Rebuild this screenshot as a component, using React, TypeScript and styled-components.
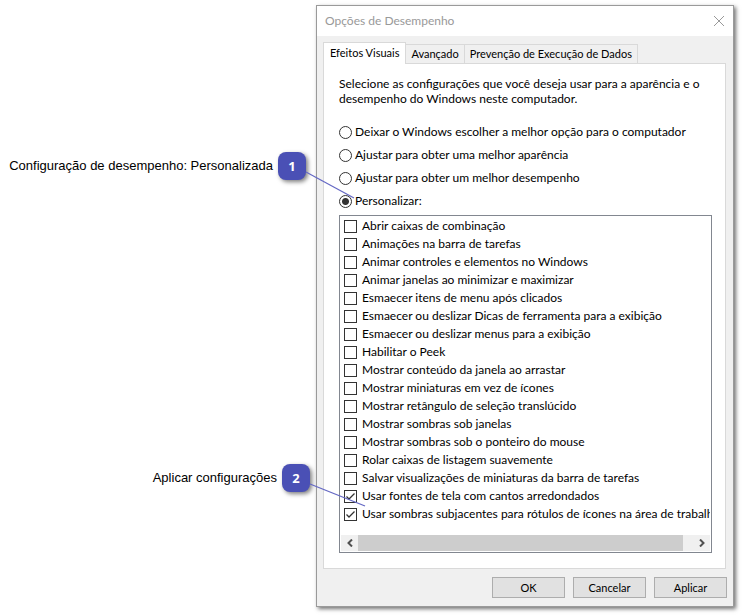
import React, { useState } from "react";
import styled, { createGlobalStyle } from "styled-components";

const GlobalStyle = createGlobalStyle`
  *, *::before, *::after { box-sizing: border-box; }
  body {
    margin: 0;
    background: #ffffff;
    color: #000000;
    font: 12px/16px Lato, "Noto Sans", sans-serif;
  }
  button, input { font: inherit; color: inherit; margin: 0; }
`;

const Page = styled.main`
  display: grid;
  grid-template-columns: 316px minmax(0, 1fr);
  padding: 5px 8px 8px 0;
`;

const Callouts = styled.aside`
  display: flex;
  flex-direction: column;
  gap: 284px;
  padding-top: 147px;
`;

const CalloutRow = styled.div<{ $inset: number }>`
  display: flex;
  align-items: center;
  justify-content: flex-end;
  gap: 5px;
  padding-right: ${(p) => p.$inset}px;
  font: 13px/16px "Liberation Sans", Arial, sans-serif;
  white-space: nowrap;
`;

const Badge = styled.span`
  position: relative;
  z-index: 1;
  display: flex;
  align-items: center;
  justify-content: center;
  width: 28px;
  height: 28px;
  border-radius: 8px;
  background: #4a50b5;
  box-shadow: 2px 2px 4px rgba(0, 0, 0, 0.5);
  color: #ffffff;
  font: bold 13px/16px "Noto Sans", sans-serif;
`;

const Connector = styled.svg`
  position: absolute;
  left: 100%;
  top: 20px;
  overflow: visible;
  pointer-events: none;
`;

const Dialog = styled.section`
  display: flex;
  flex-direction: column;
  border: 1px solid #9a9a9a;
  background: #f0f0f0;
  box-shadow: 2px 2px 4px rgba(0, 0, 0, 0.55);
`;

const TitleBar = styled.header`
  display: flex;
  align-items: center;
  justify-content: space-between;
  height: 30px;
  padding: 0 8px;
  background: #ffffff;
`;

const Title = styled.h1`
  margin: 0;
  color: #999999;
  font-size: 12px;
  line-height: 16px;
  font-weight: 400;
`;

const CloseButton = styled.button`
  display: flex;
  padding: 0;
  border: 0;
  background: none;
`;

const TabStrip = styled.div`
  display: flex;
  align-items: flex-end;
  height: 21px;
  margin: 6px 6px 0;
`;

const Tab = styled.button<{ $active: boolean }>`
  position: relative;
  height: ${(p) => (p.$active ? 22 : 19)}px;
  margin-bottom: ${(p) => (p.$active ? -1 : 0)}px;
  padding: 0 ${(p) => (p.$active ? 6 : 5)}px ${(p) => (p.$active ? 2 : 0)}px;
  border: 1px solid #d9d9d9;
  border-bottom: 0;
  & + & { border-left-width: 0; }
  background: ${(p) => (p.$active ? "#ffffff" : "#f0f0f0")};
  font-size: 11px;
  line-height: 16px;
  white-space: nowrap;
`;

const Panel = styled.div`
  display: flex;
  flex-direction: column;
  margin: 0 7px 0 6px;
  padding: 12px 13px 15px 15px;
  border: 1px solid #d9d9d9;
  background: #ffffff;
`;

const Intro = styled.p`
  margin: 0 0 18px;
  line-height: 15px;
`;

const Options = styled.div`
  display: flex;
  flex-direction: column;
  gap: 7px;
  margin-bottom: 6px;
`;

const OptionLabel = styled.label`
  display: flex;
  align-items: center;
  gap: 3px;
`;

const Radio = styled.input`
  appearance: none;
  flex: none;
  width: 13px;
  height: 13px;
  border: 1px solid #333333;
  border-radius: 50%;
  background: #ffffff;
  &:checked {
    background: radial-gradient(circle, #333333 3px, #ffffff 4px);
  }
`;

const ListFrame = styled.div`
  display: flex;
  flex-direction: column;
  border: 1px solid #828790;
  padding: 1px;
`;

const List = styled.ul`
  margin: 0 0 12px;
  padding: 0;
  overflow: hidden;
  list-style: none;
`;

const ItemLabel = styled.label`
  display: flex;
  align-items: center;
  gap: 5px;
  height: 18px;
  padding-left: 3px;
  white-space: nowrap;
`;

const CheckMark = styled.span`
  display: grid;
  flex: none;
  width: 13px;
  height: 13px;
  & > * { grid-area: 1 / 1; }
`;

const Checkbox = styled.input`
  appearance: none;
  width: 13px;
  height: 13px;
  border: 1px solid #333333;
  background: #ffffff;
`;

const Tick = styled.svg`
  pointer-events: none;
`;

const ScrollBar = styled.div`
  display: flex;
  height: 16px;
  background: #f0f0f0;
`;

const ScrollButton = styled.button`
  display: flex;
  align-items: center;
  justify-content: center;
  width: 17px;
  padding: 0;
  border: 0;
  background: none;
`;

const Track = styled.div`
  flex: 1;
`;

const Thumb = styled.div`
  width: 97%;
  height: 100%;
  background: #cdcdcd;
`;

const Footer = styled.footer`
  display: flex;
  justify-content: flex-end;
  gap: 8px;
  padding: 8px 6px;
`;

const PushButton = styled.button`
  width: 73px;
  height: 21px;
  padding: 0;
  border: 1px solid #adadad;
  background: #e1e1e1;
  font-size: 11px;
  line-height: 16px;
`;

const TABS = ["Efeitos Visuais", "Avançado", "Prevenção de Execução de Dados"];

const OPTIONS = [
  "Deixar o Windows escolher a melhor opção para o computador",
  "Ajustar para obter uma melhor aparência",
  "Ajustar para obter um melhor desempenho",
  "Personalizar:",
];

const EFFECTS = [
  "Abrir caixas de combinação",
  "Animações na barra de tarefas",
  "Animar controles e elementos no Windows",
  "Animar janelas ao minimizar e maximizar",
  "Esmaecer itens de menu após clicados",
  "Esmaecer ou deslizar Dicas de ferramenta para a exibição",
  "Esmaecer ou deslizar menus para a exibição",
  "Habilitar o Peek",
  "Mostrar conteúdo da janela ao arrastar",
  "Mostrar miniaturas em vez de ícones",
  "Mostrar retângulo de seleção translúcido",
  "Mostrar sombras sob janelas",
  "Mostrar sombras sob o ponteiro do mouse",
  "Rolar caixas de listagem suavemente",
  "Salvar visualizações de miniaturas da barra de tarefas",
  "Usar fontes de tela com cantos arredondados",
  "Usar sombras subjacentes para rótulos de ícones na área de trabalho",
];

interface CalloutProps {
  label: string;
  number: number;
  inset: number;
  dx: number;
  dy: number;
}

function Callout({ label, number, inset, dx, dy }: CalloutProps) {
  return (
    <CalloutRow $inset={inset}>
      <span>{label}</span>
      <Badge>
        {number}
        <Connector width={dx} height={dy} aria-hidden="true">
          <path d={`M0 0L${dx} ${dy}`} stroke="#6468c4" strokeWidth="1.2" />
        </Connector>
      </Badge>
    </CalloutRow>
  );
}

export default function App() {
  const [tab, setTab] = useState(0);
  const [option, setOption] = useState(3);
  const [checked, setChecked] = useState<number[]>([15, 16]);

  const toggle = (index: number) =>
    setChecked((now) =>
      now.includes(index) ? now.filter((i) => i !== index) : [...now, index]
    );

  return (
    <>
      <GlobalStyle />
      <Page>
        <Callouts>
          <Callout
            label="Configuração de desempenho: Personalizada"
            number={1}
            inset={10}
            dx={48}
            dy={26}
          />
          <Callout label="Aplicar configurações" number={2} inset={6} dx={55} dy={22} />
        </Callouts>
        <Dialog role="dialog" aria-labelledby="dialog-title">
          <TitleBar>
            <Title id="dialog-title">Opções de Desempenho</Title>
            <CloseButton type="button" aria-label="Fechar">
              <svg width="12" height="12" viewBox="0 0 12 12" fill="none">
                <path d="M1 1L11 11M11 1L1 11" stroke="#999999" />
              </svg>
            </CloseButton>
          </TitleBar>
          <TabStrip role="tablist">
            {TABS.map((name, i) => (
              <Tab
                key={name}
                type="button"
                role="tab"
                aria-selected={tab === i}
                $active={tab === i}
                onClick={() => setTab(i)}
              >
                {name}
              </Tab>
            ))}
          </TabStrip>
          <Panel role="tabpanel">
            <Intro>
              Selecione as configurações que você deseja usar para a aparência e o
              desempenho do Windows neste computador.
            </Intro>
            <Options role="radiogroup">
              {OPTIONS.map((name, i) => (
                <OptionLabel key={name}>
                  <Radio
                    type="radio"
                    name="mode"
                    checked={option === i}
                    onChange={() => setOption(i)}
                  />
                  {name}
                </OptionLabel>
              ))}
            </Options>
            <ListFrame>
              <List>
                {EFFECTS.map((name, i) => (
                  <li key={name}>
                    <ItemLabel>
                      <CheckMark>
                        <Checkbox
                          type="checkbox"
                          checked={checked.includes(i)}
                          onChange={() => toggle(i)}
                        />
                        {checked.includes(i) && (
                          <Tick width="13" height="13" viewBox="0 0 13 13" fill="none">
                            <path d="M2.5 6.5L5 9L10.5 3.5" stroke="#333333" strokeWidth="1.3" />
                          </Tick>
                        )}
                      </CheckMark>
                      {name}
                    </ItemLabel>
                  </li>
                ))}
              </List>
              <ScrollBar>
                <ScrollButton type="button" aria-label="Rolar para a esquerda">
                  <svg width="8" height="8" viewBox="0 0 8 8" fill="none">
                    <path d="M6 0.5L2.5 4L6 7.5" stroke="#505050" strokeWidth="2" />
                  </svg>
                </ScrollButton>
                <Track>
                  <Thumb />
                </Track>
                <ScrollButton type="button" aria-label="Rolar para a direita">
                  <svg width="8" height="8" viewBox="0 0 8 8" fill="none">
                    <path d="M2 0.5L5.5 4L2 7.5" stroke="#505050" strokeWidth="2" />
                  </svg>
                </ScrollButton>
              </ScrollBar>
            </ListFrame>
          </Panel>
          <Footer>
            <PushButton type="button">OK</PushButton>
            <PushButton type="button">Cancelar</PushButton>
            <PushButton type="button">Aplicar</PushButton>
          </Footer>
        </Dialog>
      </Page>
    </>
  );
}
